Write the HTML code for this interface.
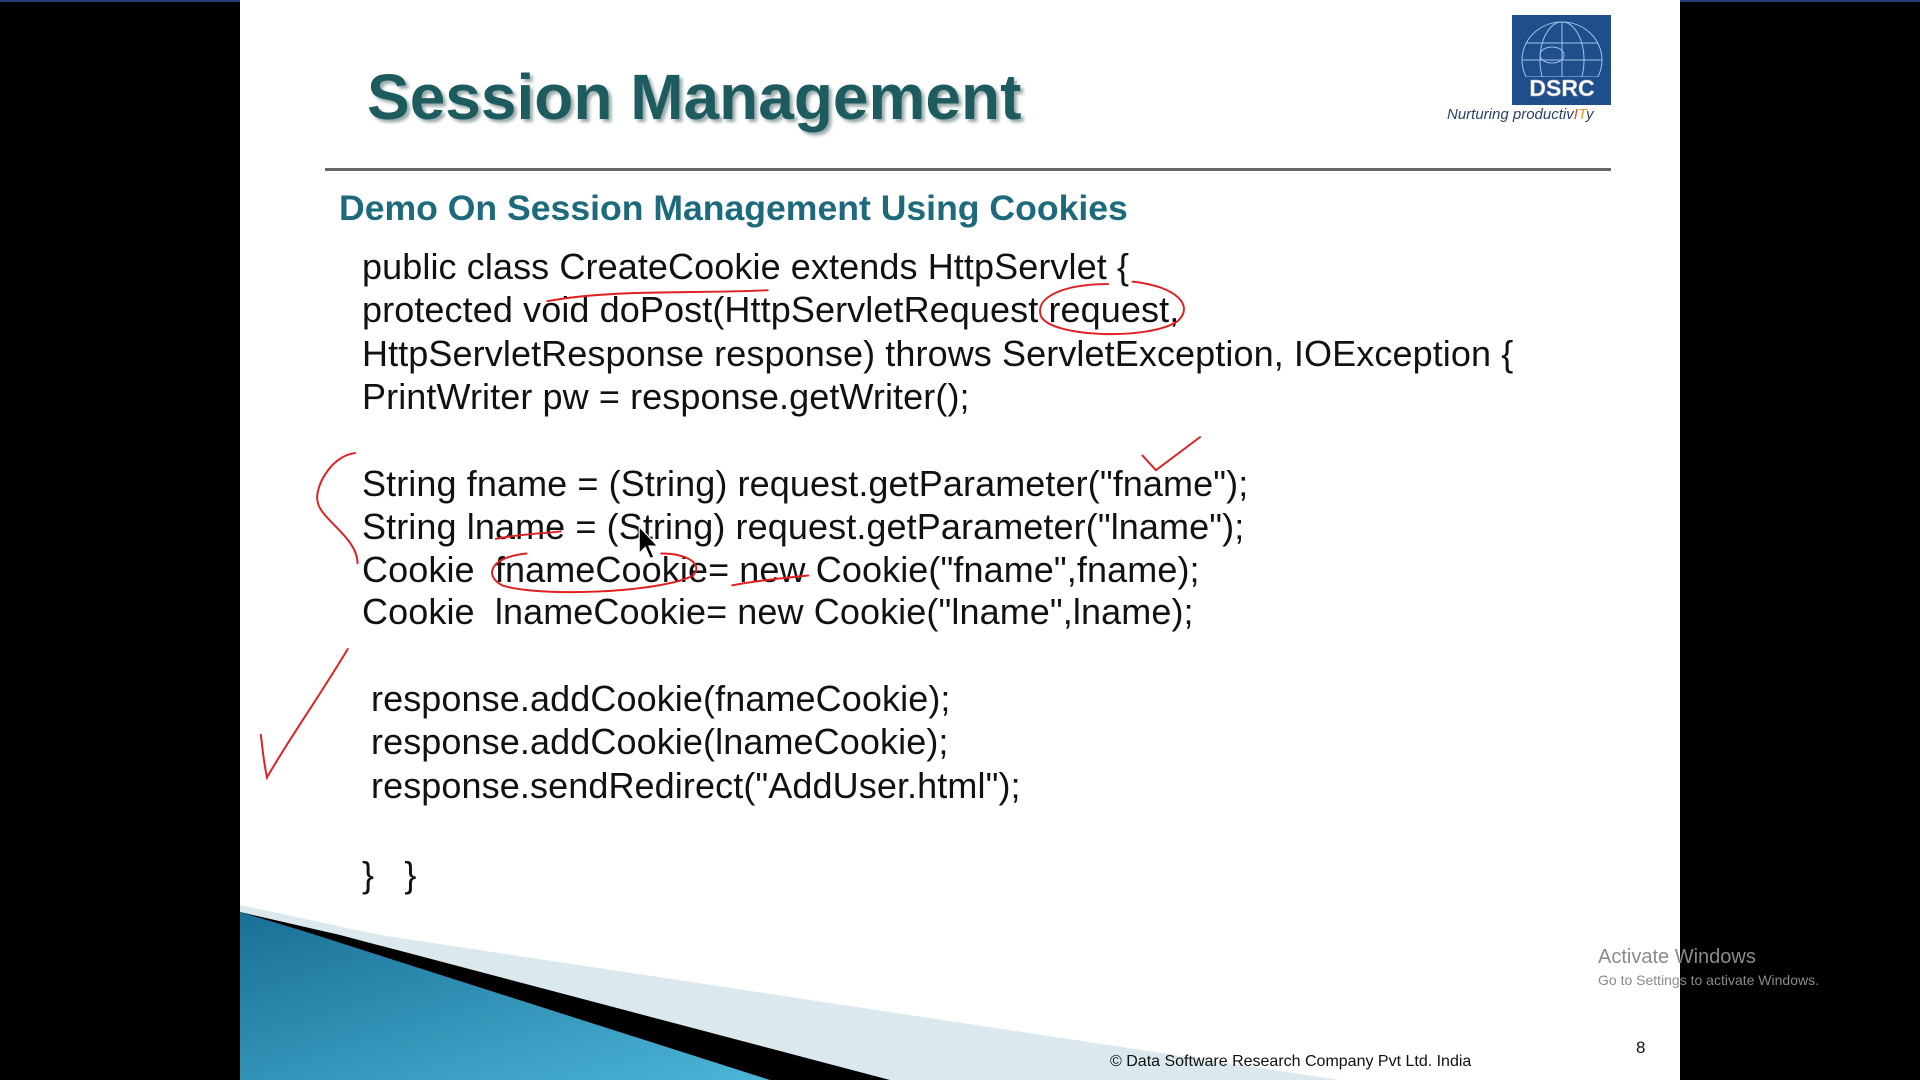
<!DOCTYPE html>
<html><head><meta charset="utf-8"><style>
html,body{margin:0;padding:0;width:1920px;height:1080px;background:#000;overflow:hidden}
#slide{position:absolute;left:240px;top:0;width:1440px;height:1080px;background:#fff;overflow:hidden}
.t{position:absolute;font-family:"Liberation Sans",sans-serif;white-space:nowrap}
.code{font-size:36px;color:#111;letter-spacing:0.1px}
</style></head><body>
<div style="position:absolute;left:0;top:0;width:1920px;height:2px;background:#1e3c78"></div>
<div id="slide">
<div class="t" style="left:127px;top:60px;font-size:64px;font-weight:bold;color:#1e5b5e;text-shadow:3px 3px 3px #9aa">Session Management</div>
<div style="position:absolute;left:85px;top:168px;width:1286px;height:3px;background:#666"></div>
<div class="t" style="left:99px;top:188px;font-size:35.6px;font-weight:bold;color:#1d6a7c">Demo On Session Management Using Cookies</div>
<!-- logo -->
<div style="position:absolute;left:1272px;top:15px;width:99px;height:90px;background:#1f4f8a"></div>
<svg style="position:absolute;left:1272px;top:15px" width="99" height="90" viewBox="0 0 99 90"><g fill="none" stroke="#9cc4ea" stroke-width="1"><ellipse cx="50" cy="45" rx="40" ry="38"/><ellipse cx="50" cy="45" rx="22" ry="38"/><ellipse cx="40" cy="40" rx="12" ry="8"/><path d="M10 45H90M14 28H86M14 62H86M50 7V83"/></g><rect x="5" y="62" width="89" height="22" fill="#1f4f8a"/><text x="50" y="81" text-anchor="middle" font-family="Liberation Sans" font-weight="bold" font-size="23" fill="#fff" stroke="#aac" stroke-width=".5">DSRC</text></svg>
<div class="t" style="left:1207px;top:106px;font-size:15px;font-style:italic;color:#2a3f6a">Nurturing productiv<span style="color:#e04a2a">I</span><span style="color:#e8a020">T</span>y</div>
<!-- code -->
<div class="t code" style="left:122px;top:246px">public class CreateCookie extends HttpServlet {</div>
<div class="t code" style="left:122px;top:289px">protected void doPost(HttpServletRequest request,</div>
<div class="t code" style="left:122px;top:333px">HttpServletResponse response) throws ServletException, IOException {</div>
<div class="t code" style="left:122px;top:376px">PrintWriter pw = response.getWriter();</div>
<div class="t code" style="left:122px;top:463px">String fname = (String) request.getParameter("fname");</div>
<div class="t code" style="left:122px;top:506px">String lname = (String) request.getParameter("lname");</div>
<div class="t code" style="left:122px;top:549px">Cookie &nbsp;fnameCookie= new Cookie("fname",fname);</div>
<div class="t code" style="left:122px;top:591px">Cookie &nbsp;lnameCookie= new Cookie("lname",lname);</div>
<div class="t code" style="left:131px;top:678px">response.addCookie(fnameCookie);</div>
<div class="t code" style="left:131px;top:721px">response.addCookie(lnameCookie);</div>
<div class="t code" style="left:131px;top:765px">response.sendRedirect("AddUser.html");</div>
<div class="t code" style="left:122px;top:854px">} &nbsp; }</div>
<!-- bottom shapes -->
<svg style="position:absolute;left:0;top:0" width="1440" height="1080">
<defs><linearGradient id="g" x1="0" y1="0" x2="1" y2="1"><stop offset="0" stop-color="#1a6f95"/><stop offset="1" stop-color="#4bb5d8"/></linearGradient></defs>
<polygon points="0,905 140,935 1100,1080 0,1080" fill="#dbe9ee"/>
<polygon points="0,912 100,935 650,1080 0,1080" fill="#000"/>
<polygon points="0,912 60,930 530,1080 0,1080" fill="url(#g)"/>
</svg>
<div class="t" style="left:870px;top:1053px;font-size:16px;color:#111">© Data Software Research Company Pvt Ltd. India</div>
<div class="t" style="left:1396px;top:1038px;font-size:17px;color:#111">8</div>
</div>
<div class="t" style="left:1598px;top:946px;font-size:20px;color:#8a8a8a">Activate Windows</div>
<div class="t" style="left:1598px;top:972px;font-size:14px;color:#8a8a8a">Go to Settings to activate Windows.</div>
<svg style="position:absolute;left:0;top:0" width="1920" height="1080" viewBox="0 0 1568 882"><g fill="none" stroke="#e02020" stroke-width="1.6" stroke-linecap="round">
<path d="M447 246 C500 236 570 240 627 237"/>
<path d="M905 232 C870 232 845 242 850 258 C858 276 940 278 962 262 C975 250 962 234 925 230"/>
<path d="M933 372 L944 384 L980 357"/>
<path d="M290 370 C270 372 255 400 260 412 C264 425 292 440 292 460"/>
<path d="M430 452 C400 455 395 470 410 478 C440 488 540 484 566 470 C575 460 560 452 540 452"/>
<path d="M405 440 C425 436 440 436 458 434"/>
<path d="M284 530 C260 570 235 605 218 635 C215 620 214 608 213 600"/>
<path d="M598 478 C620 474 640 472 660 470"/>
</g>
<path d="M522 430 L522 452 L527 447 L531 456 L534 455 L530 446 L537 446 Z" fill="#000" stroke="#fff" stroke-width="1"/>
</svg>
</body></html>
